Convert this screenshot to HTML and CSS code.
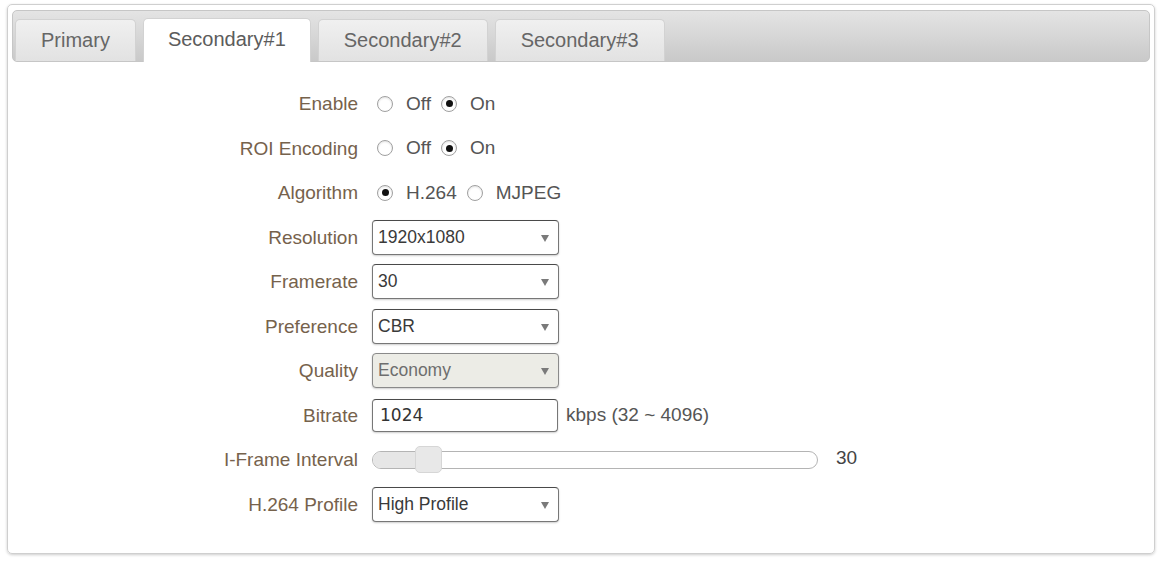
FILE: index.html
```html
<!DOCTYPE html>
<html lang="en">
<head>
    <meta charset="UTF-8">
    <title>Video Stream - Secondary#1</title>
    <link rel="stylesheet" href="styles.css">
</head>
<body>
    <div class="panel">
        <div class="tab-bar">
            <div class="tab">Primary</div>
            <div class="tab active">Secondary#1</div>
            <div class="tab">Secondary#2</div>
            <div class="tab">Secondary#3</div>
        </div>

        <div class="stream-form">
            <label class="field-label">Enable</label>
            <div class="field radios">
                <input type="radio" name="enable"> <span>Off</span>
                <input type="radio" name="enable" checked> <span>On</span>
            </div>

            <label class="field-label">ROI Encoding</label>
            <div class="field radios">
                <input type="radio" name="roi"> <span>Off</span>
                <input type="radio" name="roi" checked> <span>On</span>
            </div>

            <label class="field-label">Algorithm</label>
            <div class="field radios">
                <input type="radio" name="algo" checked> <span>H.264</span>
                <input type="radio" name="algo"> <span>MJPEG</span>
            </div>

            <label class="field-label">Resolution</label>
            <div class="field">
                <div class="select"><span>1920x1080</span></div>
            </div>

            <label class="field-label">Framerate</label>
            <div class="field">
                <div class="select"><span>30</span></div>
            </div>

            <label class="field-label">Preference</label>
            <div class="field">
                <div class="select"><span>CBR</span></div>
            </div>

            <label class="field-label">Quality</label>
            <div class="field">
                <div class="select disabled"><span>Economy</span></div>
            </div>

            <label class="field-label">Bitrate</label>
            <div class="field">
                <input type="text" class="text-input" value="1024">
                <span class="hint">kbps (32 ~ 4096)</span>
            </div>

            <label class="field-label">I-Frame Interval</label>
            <div class="field">
                <div class="slider">
                    <div class="slider-fill"></div>
                    <div class="slider-thumb"></div>
                </div>
                <span class="slider-value">30</span>
            </div>

            <label class="field-label">H.264 Profile</label>
            <div class="field">
                <div class="select"><span>High Profile</span></div>
            </div>
        </div>
    </div>
</body>
</html>
```

FILE: styles.css
```css
body {
    margin: 0;
    padding: 4px 7px;
    font-family: "Liberation Sans", Arial, sans-serif;
    background: #fff;
}
.panel {
    border: 1px solid #cfcfcf;
    border-radius: 5px;
    box-shadow: 0 1px 3px rgba(0, 0, 0, 0.2);
    padding: 5px 4px 30px 4px;
    height: 513px;
}
.tab-bar {
    display: flex;
    align-items: flex-end;
    gap: 7px;
    height: 50px;
    padding: 0 2px;
    border: 1px solid #c6c6c6;
    border-radius: 5px;
    background: linear-gradient(to bottom, #e4e4e4, #c9c9c9);
}
.tab {
    height: 41px;
    line-height: 41px;
    padding: 0 25px;
    font-size: 20px;
    color: #666;
    background: linear-gradient(to bottom, #f0f0f0, #e2e2e2);
    border: 1px solid #d2d2d2;
    border-bottom: none;
    border-radius: 5px 5px 0 0;
}
.tab.active {
    background: #fff;
    height: 43px;
    margin-bottom: -1px;
    padding: 0 24px;
    color: #5c5c5c;
}
.stream-form {
    display: grid;
    grid-template-columns: 350px auto;
    grid-auto-rows: 35px;
    column-gap: 14px;
    row-gap: 9.5px;
    padding-top: 24px;
    margin-left: -4px;
}
.field-label {
    text-align: right;
    font-size: 19px;
    color: #76624c;
    line-height: 35px;
}
.field {
    display: flex;
    align-items: center;
}
.radios {
    font-size: 19px;
    color: #555;
}
.radios input {
    appearance: none;
    flex: none;
    width: 16px;
    height: 16px;
    margin: 0 13px 0 5px;
    border: 1px solid #a0a0a0;
    border-radius: 50%;
    background: #fff;
    box-shadow: inset 0 1px 2px rgba(0, 0, 0, 0.12);
    position: relative;
}
.radios span {
    margin-right: 5px;
}
.radios input:checked::after {
    content: "";
    position: absolute;
    left: 3.5px;
    top: 3.5px;
    width: 7px;
    height: 7px;
    border-radius: 50%;
    background: #111;
}
.select {
    position: relative;
    box-sizing: border-box;
    width: 187px;
    height: 35px;
    padding-left: 5px;
    border: 1px solid #777;
    border-top-color: #4a4a4a;
    border-radius: 4px;
    box-shadow: 0 1px 2px rgba(0, 0, 0, 0.2);
    background: #fff;
    font-size: 17.5px;
    line-height: 33px;
    color: #3a3a3a;
}
.select::after {
    content: "";
    position: absolute;
    right: 9px;
    top: 14px;
    border-left: 4px solid transparent;
    border-right: 4px solid transparent;
    border-top: 7px solid #7a7a7a;
}
.select.disabled {
    background: #ecece6;
    color: #6e6e6e;
    border-color: #8a8a8a;
}
.text-input {
    box-sizing: border-box;
    width: 186px;
    height: 33px;
    margin: 0;
    padding: 0 7px;
    border: 1px solid #777;
    border-top-color: #4a4a4a;
    border-radius: 4px;
    box-shadow: 0 1px 2px rgba(0, 0, 0, 0.2);
    font-family: "DejaVu Sans", sans-serif;
    font-size: 17px;
    color: #333;
}
.hint {
    margin-left: 8px;
    font-size: 19px;
    color: #555;
}
.slider {
    position: relative;
    box-sizing: border-box;
    width: 446px;
    height: 18px;
    border: 1px solid #b4b4b4;
    border-radius: 9px;
    background: #fff;
}
.slider-fill {
    width: 44px;
    height: 100%;
    border-radius: 9px 0 0 9px;
    background: #e6e6e6;
}
.slider-thumb {
    position: absolute;
    left: 42px;
    top: -6px;
    width: 27px;
    height: 27px;
    box-sizing: border-box;
    border: 1px solid #d6d6d6;
    border-radius: 5px;
    background: #e8e8e8;
}
.slider-value {
    margin-left: 18px;
    margin-top: -4px;
    font-size: 19px;
    color: #444;
}
```
